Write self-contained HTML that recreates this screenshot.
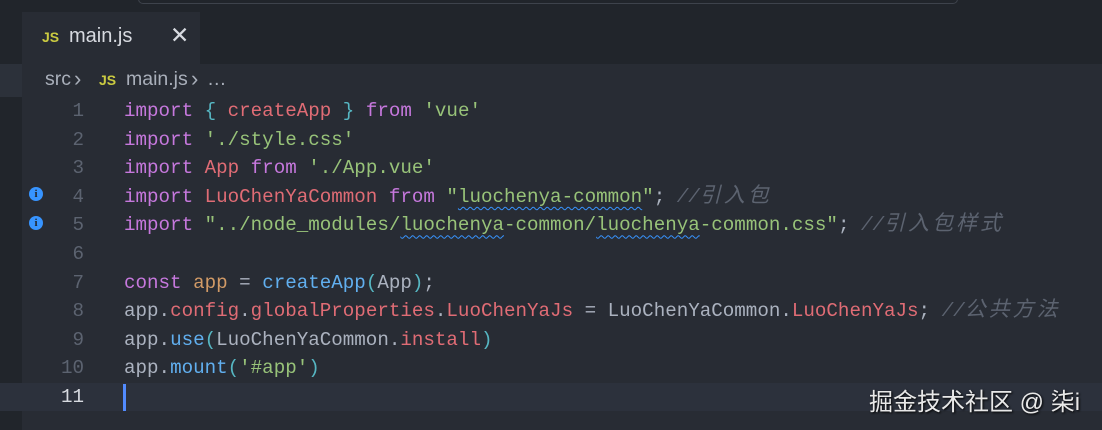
<!DOCTYPE html>
<html><head><meta charset="utf-8"><style>
body{margin:0;width:1102px;height:430px;background:#282c34;overflow:hidden;position:relative;font-family:"Liberation Sans","Noto Sans CJK SC",sans-serif}
.top{position:absolute;left:0;top:0;width:1102px;height:64px;background:#21252b}
.srch{position:absolute;left:138px;top:-8px;width:818px;height:10px;border:1px solid #3e434c;border-radius:5px;background:#21252b}
.tab{position:absolute;left:22px;top:12px;width:178px;height:52px;background:#282c34}
.left{position:absolute;left:0;top:64px;width:22px;height:366px;background:#21252b}
.band{position:absolute;left:0;top:64px;width:22px;height:33px;background:#2c313a}
.js{color:#cbcb41;font-weight:bold;font-size:14px}
.code{position:absolute;left:0;top:97px;font-family:"Liberation Mono","Noto Sans CJK SC",monospace;font-size:19.2px}
.ln{position:absolute;left:40px;width:44px;text-align:right;color:#5c6370}
.l{position:absolute;left:124px;white-space:pre;color:#abb2bf;height:28.6px;line-height:28.6px}
.k{color:#c678dd}.v{color:#e06c75}.s{color:#98c379}.b{color:#56b6c2}.f{color:#61afef}.o{color:#d19a66}.c{color:#5c6370;font-style:italic}
.cj{font-size:21px;letter-spacing:3px}
.sq{text-decoration:underline wavy #3794ff;text-decoration-thickness:1px;text-underline-offset:4px}
.info{position:absolute;left:29px;width:14px;height:14px;border-radius:50%;background:#3794ff;color:#21252b;font-size:11px;font-weight:bold;text-align:center;line-height:14px;font-family:"Liberation Serif",serif}
.bc{position:absolute;top:68px;color:#a9afba;font-size:19.5px;white-space:nowrap}
</style></head><body>
<div class="top"><div class="srch"></div></div>
<div class="tab">
<span class="js" style="position:absolute;left:20px;top:17px">JS</span>
<span style="position:absolute;left:47px;top:13px;color:#d7dae0;font-size:20px">main.js</span>
<span style="position:absolute;left:148px;top:10px;color:#d7dae0;font-size:23px">✕</span>
</div>
<div class="left"></div><div class="band"></div>
<span class="bc" style="left:45px">src</span>
<span class="bc" style="left:74px;font-size:22px;top:66px">›</span>
<span class="js" style="position:absolute;left:99px;top:72px">JS</span>
<span class="bc" style="left:126px">main.js</span>
<span class="bc" style="left:191px;font-size:22px;top:66px">›</span>
<span class="bc" style="left:207px">…</span>
<div style="position:absolute;left:0;top:383px;width:1102px;height:28px;background:#2c313c"></div>
<div class="code">
<div class="info" style="top:90px">i</div><div class="info" style="top:119px">i</div>
<div class="ln" style="top:0;line-height:28.6px">1</div>
<div class="ln" style="top:28.6px;line-height:28.6px">2</div>
<div class="ln" style="top:57.2px;line-height:28.6px">3</div>
<div class="ln" style="top:85.8px;line-height:28.6px">4</div>
<div class="ln" style="top:114.4px;line-height:28.6px">5</div>
<div class="ln" style="top:143px;line-height:28.6px">6</div>
<div class="ln" style="top:171.6px;line-height:28.6px">7</div>
<div class="ln" style="top:200.2px;line-height:28.6px">8</div>
<div class="ln" style="top:228.8px;line-height:28.6px">9</div>
<div class="ln" style="top:257.4px;line-height:28.6px">10</div>
<div class="ln" style="top:286px;line-height:28.6px;color:#d7dae0">11</div>
<div class="l" style="top:0"><span class="k">import</span> <span class="b">{</span> <span class="v">createApp</span> <span class="b">}</span> <span class="k">from</span> <span class="s">'vue'</span></div>
<div class="l" style="top:28.6px"><span class="k">import</span> <span class="s">'./style.css'</span></div>
<div class="l" style="top:57.2px"><span class="k">import</span> <span class="v">App</span> <span class="k">from</span> <span class="s">'./App.vue'</span></div>
<div class="l" style="top:85.8px"><span class="k">import</span> <span class="v">LuoChenYaCommon</span> <span class="k">from</span> <span class="s">"<span class="sq">luochenya-common</span>"</span>; <span class="c">//<span class="cj">引入包</span></span></div>
<div class="l" style="top:114.4px"><span class="k">import</span> <span class="s">"../node_modules/<span class="sq">luochenya</span>-common/<span class="sq">luochenya</span>-common.css"</span>; <span class="c">//<span class="cj">引入包样式</span></span></div>
<div class="l" style="top:171.6px"><span class="k">const</span> <span class="o">app</span> = <span class="f">createApp</span><span class="b">(</span>App<span class="b">)</span>;</div>
<div class="l" style="top:200.2px">app.<span class="v">config</span>.<span class="v">globalProperties</span>.<span class="v">LuoChenYaJs</span> = LuoChenYaCommon.<span class="v">LuoChenYaJs</span>; <span class="c">//<span class="cj">公共方法</span></span></div>
<div class="l" style="top:228.8px">app.<span class="f">use</span><span class="b">(</span>LuoChenYaCommon.<span class="v">install</span><span class="b">)</span></div>
<div class="l" style="top:257.4px">app.<span class="f">mount</span><span class="b">(</span><span class="s">'#app'</span><span class="b">)</span></div>
</div>
<div style="position:absolute;left:123px;top:384px;width:3px;height:27px;background:#528bff"></div>
<div style="position:absolute;left:869px;top:382px;color:#e8e8e8;font-size:24px;white-space:nowrap;text-shadow:1px 1px 2px #000">掘金技术社区 @ 柒i</div>
</body></html>
